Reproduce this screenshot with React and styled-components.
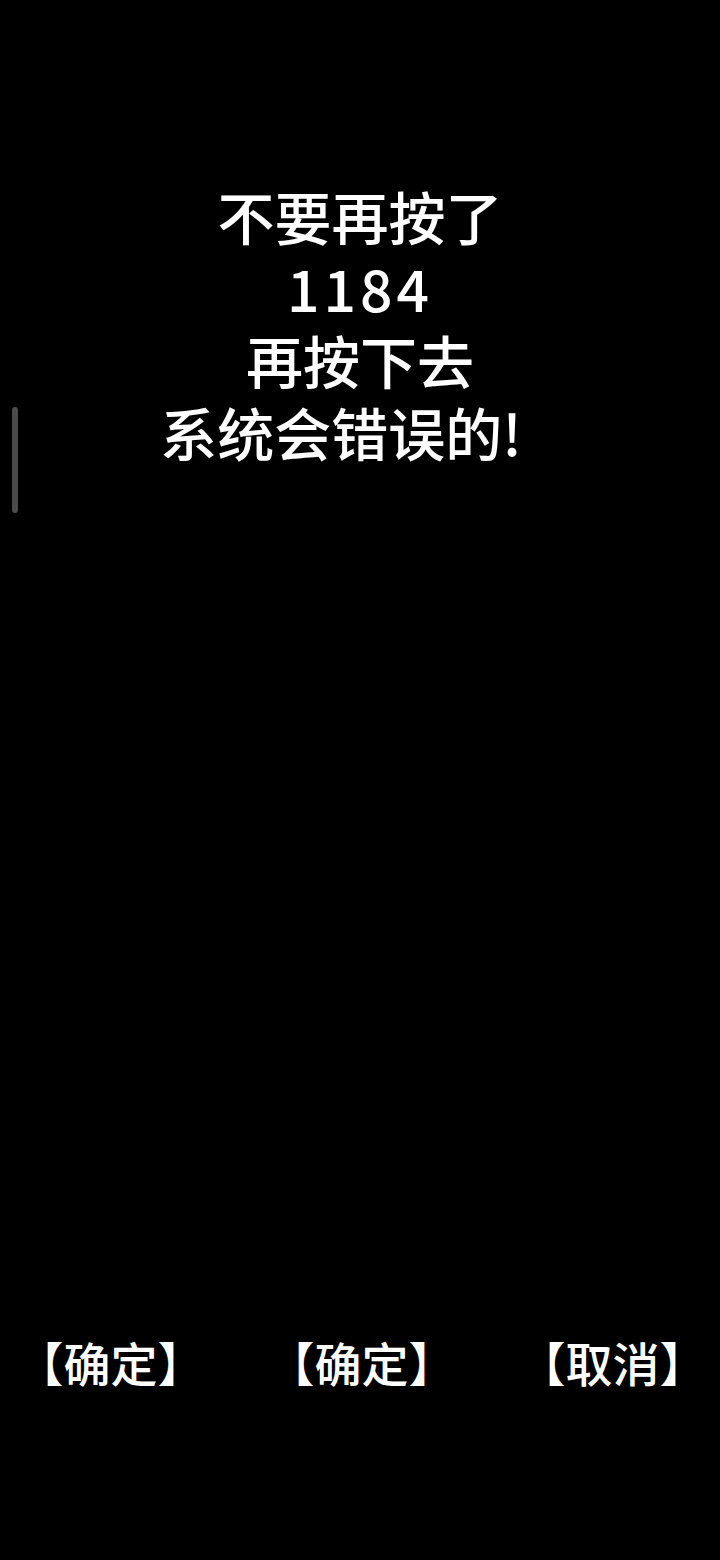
import React from "react";
import styled, { createGlobalStyle } from "styled-components";

const GlobalStyle = createGlobalStyle`
  html, body {
    margin: 0;
    padding: 0;
    background: #000;
  }
  body {
    font-family: "Noto Sans CJK SC", "Noto Sans", sans-serif;
    color: #fff;
  }
`;

const Screen = styled.div`
  position: relative;
  width: 720px;
  min-height: 1560px;
  background: #000;
  display: flex;
  flex-direction: column;
  overflow: hidden;
`;

const Message = styled.div`
  display: flex;
  flex-direction: column;
  align-items: center;
  padding-top: 179px;
`;

const Line = styled.div`
  font-size: 57px;
  line-height: 72px;
  font-weight: 500;
  color: #fff;
  text-align: center;
  white-space: nowrap;
  letter-spacing: ${(p) => p.$tracking || 0}px;
  padding-right: ${(p) => p.$shift || 0}px;
`;

const ButtonRow = styled.div`
  margin-top: auto;
  display: flex;
  justify-content: space-between;
  align-items: center;
  padding: 0 37px 168px 40px;
`;

const DialogButton = styled.button`
  background: none;
  border: none;
  padding: 0;
  margin: 0;
  color: #fff;
  font-family: "Noto Sans CJK SC", "Noto Sans", sans-serif;
  font-size: 47px;
  line-height: 60px;
  font-weight: 500;
  font-feature-settings: "halt";
  cursor: pointer;
  white-space: nowrap;
`;

const ScrollThumb = styled.div`
  position: absolute;
  left: 12px;
  top: 407px;
  width: 6px;
  height: 106px;
  border-radius: 3px;
  background: #4a4a4a;
`;

export default function App() {
  return (
    <>
      <GlobalStyle />
      <Screen>
        <ScrollThumb />
        <Message>
          <Line>不要再按了</Line>
          <Line $tracking={4}>1184</Line>
          <Line>再按下去</Line>
          <Line $shift={38}>系统会错误的!</Line>
        </Message>
        <ButtonRow>
          <DialogButton>【确定】</DialogButton>
          <DialogButton>【确定】</DialogButton>
          <DialogButton>【取消】</DialogButton>
        </ButtonRow>
      </Screen>
    </>
  );
}
